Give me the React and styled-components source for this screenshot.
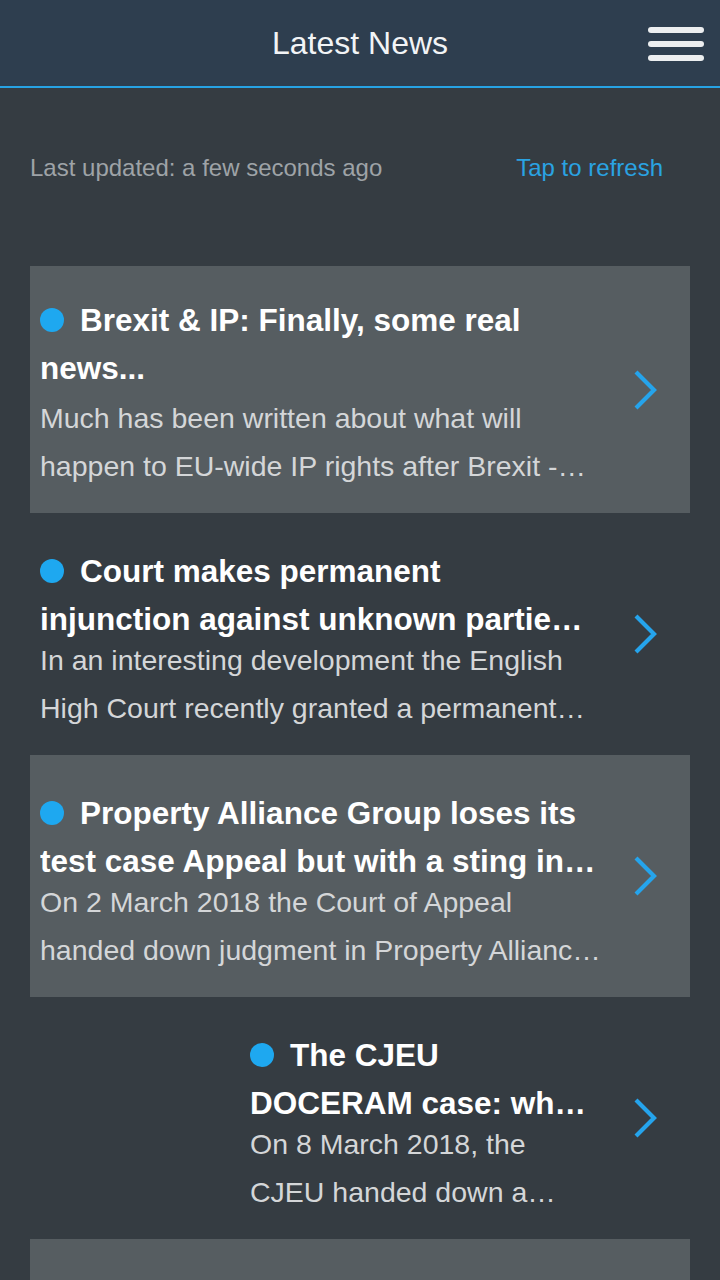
import React from 'react';
import styled, { createGlobalStyle } from 'styled-components';

const Global = createGlobalStyle`
    html, body {
        margin: 0;
        padding: 0;
        background-color: #353c42;
    }
    body {
        font-family: "Liberation Sans", Arial, Helvetica, sans-serif;
    }
`

const Page = styled.div`
    width: 720px;
    height: 1280px;
    overflow: hidden;
    background-color: #353c42;
`

const Header = styled.div`
    height: 86px;
    background-color: #2e3e4f;
    border-bottom: 2px solid #27a3e4;
    display: flex;
    align-items: center;
    justify-content: center;
    position: relative;
`

const HeaderTitle = styled.div`
    color: #f2f4f6;
    font-size: 32px;
`

const Menu = styled.div`
    position: absolute;
    right: 16px;
    top: 27px;
    width: 56px;
    display: flex;
    flex-direction: column;
    gap: 8px;
`

const MenuBar = styled.div`
    height: 6px;
    border-radius: 3px;
    background-color: #eceef0;
`

const StatusRow = styled.div`
    display: flex;
    justify-content: space-between;
    align-items: center;
    padding: 65px 57px 0 30px;
    height: 30px;
    font-size: 24px;
`

const Updated = styled.div`
    color: #9ea3a7;
`

const Refresh = styled.div`
    color: #2aa3e2;
`

const List = styled.div`
    margin: 83px 30px 0;
`

const Item = styled.div`
    display: flex;
    align-items: center;
    height: ${p => p.tall ? 247 : 242}px;
    padding: 0 10px;
    box-sizing: border-box;
    background-color: ${p => p.shaded ? '#565d61' : 'transparent'};
`

const Thumb = styled.div`
    width: 200px;
    height: 200px;
    margin-right: 10px;
    flex-shrink: 0;
`

const Body = styled.div`
    flex: 1;
    min-width: 0;
    padding-top: ${p => p.tall ? 7 : 11}px;
`

const Title = styled.div`
    color: #ffffff;
    font-size: 31.5px;
    font-weight: 700;
    line-height: 48px;
    padding-right: 4px;
    display: -webkit-box;
    -webkit-line-clamp: 2;
    -webkit-box-orient: vertical;
    overflow: hidden;
`

const Dot = styled.span`
    display: inline-block;
    width: 24px;
    height: 24px;
    border-radius: 50%;
    background-color: #1ea8f0;
    margin-right: 16px;
    vertical-align: -1px;
`

const Desc = styled.div`
    color: #d4d6d8;
    font-size: 28.5px;
    line-height: 48px;
    margin-top: ${p => p.gap}px;
    display: -webkit-box;
    -webkit-line-clamp: 2;
    -webkit-box-orient: vertical;
    overflow: hidden;
`

const Arrow = styled.div`
    width: 78px;
    flex-shrink: 0;
    display: flex;
    justify-content: center;
    padding-left: 8px;
    box-sizing: border-box;
`

const Chevron = () => (
    <svg width="26" height="40" viewBox="0 0 26 40">
        <path d="M4 2 L22 20 L4 38" fill="none" stroke="#25a4ec" strokeWidth="4.2" />
    </svg>
)

const news = [
    {
        title: 'Brexit & IP: Finally, some real news...',
        desc: 'Much has been written about what will happen to EU-wide IP rights after Brexit - and very little of it has been certain.',
    },
    {
        title: 'Court makes permanent injunction against unknown parties in trade secrets case',
        desc: 'In an interesting development the English High Court recently granted a permanent injunction against persons unknown.',
    },
    {
        title: 'Property Alliance Group loses its test case Appeal but with a sting in the tail',
        desc: 'On 2 March 2018 the Court of Appeal handed down judgment in Property Alliance Group v Royal Bank of Scotland.',
    },
    {
        title: 'The CJEU DOCERAM case: what is the test for technical function?',
        desc: 'On 8 March 2018, the CJEU handed down a decision in the DOCERAM case.',
        thumb: true,
    },
    {
        title: '',
        desc: '',
    },
]

class App extends React.Component {
    render() {
        return (
            <Page>
                <Global />
                <Header>
                    <HeaderTitle>Latest News</HeaderTitle>
                    <Menu>
                        <MenuBar />
                        <MenuBar />
                        <MenuBar />
                    </Menu>
                </Header>
                <StatusRow>
                    <Updated>Last updated: a few seconds ago</Updated>
                    <Refresh>Tap to refresh</Refresh>
                </StatusRow>
                <List>
                    {news.map((n, i) => (
                        <Item key={i} shaded={i % 2 === 0} tall={i === 0}>
                            {n.thumb && <Thumb />}
                            {n.title && (
                                <Body tall={i === 0}>
                                    <Title><Dot />{n.title}</Title>
                                    <Desc gap={i === 0 ? 2 : -7}>{n.desc}</Desc>
                                </Body>
                            )}
                            {n.title && <Arrow><Chevron /></Arrow>}
                        </Item>
                    ))}
                </List>
            </Page>
        )
    }
}

export default App
